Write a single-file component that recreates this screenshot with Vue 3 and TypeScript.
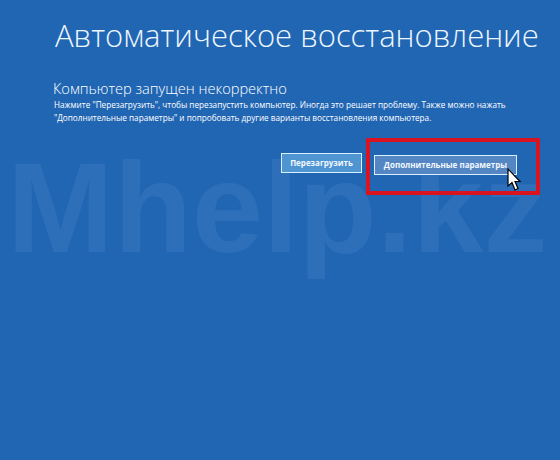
<script setup lang="ts">
const title = 'Автоматическое восстановление'
const subtitle = 'Компьютер запущен некорректно'
const lines = [
  'Нажмите "Перезагрузить", чтобы перезапустить компьютер. Иногда это решает проблему. Также можно нажать',
  '"Дополнительные параметры" и попробовать другие варианты восстановления компьютера.',
]
</script>

<template>
  <main class="screen">
    <div class="watermark">Mhelp.kz</div>
    <h1 class="title">{{ title }}</h1>
    <section class="message">
      <h2 class="subtitle">{{ subtitle }}</h2>
      <p v-for="line in lines" :key="line" class="body">{{ line }}</p>
    </section>
    <div class="actions">
      <button class="btn primary">Перезагрузить</button>
      <div class="highlight">
        <button class="btn secondary">Дополнительные параметры</button>
      </div>
    </div>
    <svg class="cursor" width="16" height="24" viewBox="0 0 16 24">
      <path d="M1 1 V18 L5 14.5 L8 22 L11 20.5 L8 13.5 H13 Z" fill="#fff" stroke="#000" stroke-width="1.2" />
    </svg>
  </main>
</template>

<style scoped>
.screen {
  position: relative;
  width: 560px;
  height: 460px;
  overflow: hidden;
  box-sizing: border-box;
  padding: 17px 0 0 55px;
  background: #2166b3;
  color: #fff;
  font-family: 'Open Sans', 'Noto Sans', sans-serif;
}
.watermark {
  position: absolute;
  left: 7px;
  top: 134px;
  font: 700 128px/1.15 'Liberation Sans', sans-serif;
  color: #2e6fb9;
  white-space: nowrap;
}
.title,
.subtitle,
.body,
.message {
  position: relative;
  margin: 0;
}
.title {
  font-size: 31px;
  font-weight: 300;
  line-height: 36px;
  color: #eef6ff;
  white-space: nowrap;
}
.message {
  margin-top: 27px;
}
.subtitle {
  font-size: 14.6px;
  font-weight: 300;
  line-height: 17px;
  margin-left: -2px;
  margin-bottom: 1px;
  white-space: nowrap;
}
.body {
  font-size: 8.2px;
  line-height: 13px;
  margin-left: -1px;
  white-space: nowrap;
}
.actions {
  position: relative;
  display: flex;
  align-items: center;
  margin: 27px 0 0 226px;
}
.btn {
  box-sizing: border-box;
  height: 20px;
  padding: 0;
  border: 1px solid #d8f0ff;
  color: #f2f8ff;
  font: 700 8px 'Open Sans', 'Noto Sans', sans-serif;
  white-space: nowrap;
}
.primary {
  width: 81px;
  background: #4f95d2;
}
.secondary {
  width: 143px;
  background: #5486c3;
}
.highlight {
  position: relative;
  margin-left: 12px;
}
.highlight::after {
  content: '';
  position: absolute;
  left: -8px;
  top: -13px;
  width: 174px;
  height: 57px;
  box-sizing: border-box;
  border: 4px solid #d91320;
  pointer-events: none;
}
.cursor {
  position: absolute;
  left: 507px;
  top: 168px;
}
</style>
